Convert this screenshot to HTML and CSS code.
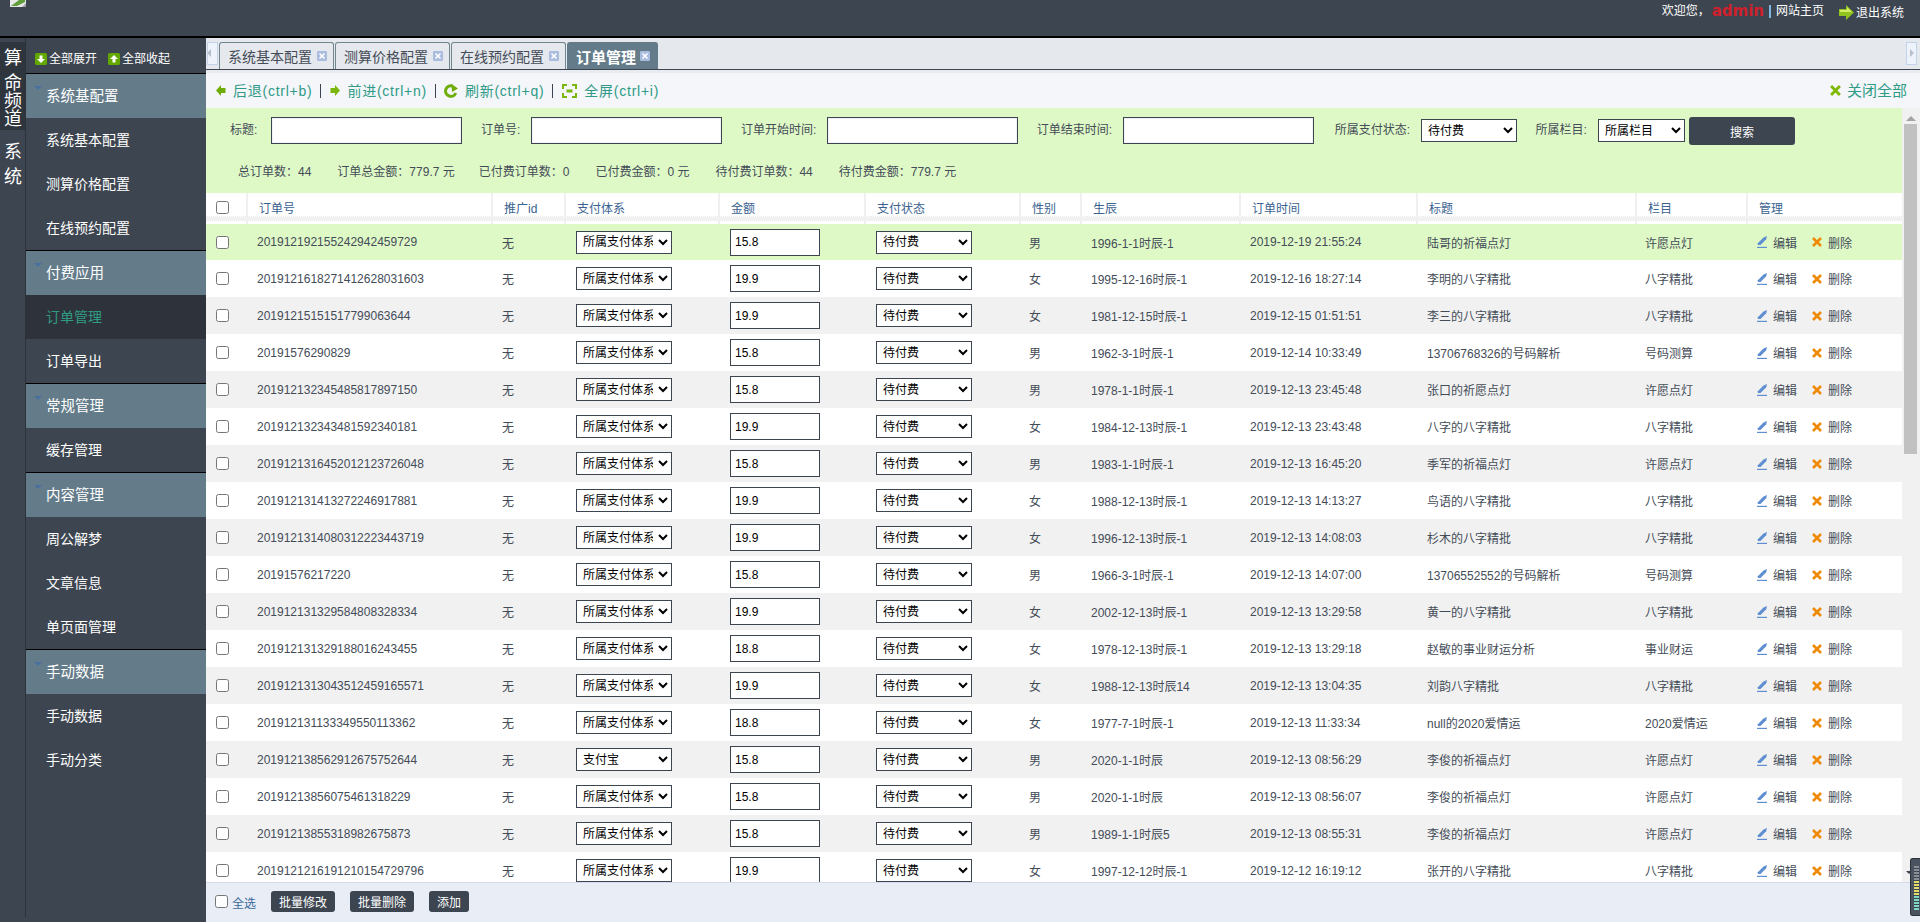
FILE: index.html
```html
<!DOCTYPE html>
<html lang="zh-CN">

<head>
    <meta charset="UTF-8">
    <title>订单管理</title>
    <link rel="stylesheet" href="styles.css">
</head>

<body>
    <svg class="defs" aria-hidden="true">
        <symbol id="i-back" viewBox="0 0 10 11"><path d="M0 5.500 5 0v3h4.500v5H5v3z" fill="#6fae0a"/></symbol>
        <symbol id="i-next" viewBox="0 0 10 11"><path d="M10 5.500 5 0v3H.5v5H5v3z" fill="#7ab60c"/></symbol>
        <symbol id="i-refresh" viewBox="0 0 14 14"><path d="M11.800 9A5.300 5.300 0 1 1 8.500 2" fill="none" stroke="#6fae0a" stroke-width="3"/><path d="M7.500 0 14 4.500 8 8z" fill="#6fae0a"/></symbol>
        <symbol id="i-full" viewBox="0 0 15 14"><path d="M1 5V1h4M10 1h4v4M14 9v4h-4M5 13H1V9" fill="none" stroke="#7ab60c" stroke-width="2"/><rect x="4.500" y="5.500" width="6" height="3" fill="#7ab60c"/></symbol>
        <symbol id="i-x" viewBox="0 0 10 10"><path d="M1 1l8 8M9 1l-8 8" stroke="currentColor" stroke-width="2.600" fill="none"/></symbol>
        <symbol id="i-edit" viewBox="0 0 10 12"><path d="M.8 7.200 6.500 1.500 10 0 9.200 3.200 3.500 9H.8z" fill="#5f8fd0"/><rect x="0" y="10.800" width="10" height="1.200" fill="#5f8fd0"/></symbol>
        <symbol id="i-close" viewBox="0 0 10 10"><rect width="10" height="10" rx="1" fill="#a9bce0"/><path d="M2.500 2.500l5 5M7.500 2.500l-5 5" stroke="#fff" stroke-width="1.600"/></symbol>
        <symbol id="i-down" viewBox="0 0 12 12"><rect width="12" height="12" rx="1.500" fill="#62a800"/><path d="M4.500 2.500h3V6H10L6 10 2 6h2.500z" fill="#fff"/></symbol>
        <symbol id="i-up" viewBox="0 0 12 12"><rect width="12" height="12" rx="1.500" fill="#62a800"/><path d="M4.500 9.500h3V6H10L6 2 2 6h2.500z" fill="#fff"/></symbol>
        <symbol id="i-exit" viewBox="0 0 15 15"><path d="M0 4h7V0l8 7.500L7 15v-4H0z" fill="#8fc31f"/><path d="M1 5h7V2l5 5H1z" fill="#d5ec63"/></symbol>
    </svg>

    <div class="top">
        <svg class="broken" viewBox="0 0 16 7"><path d="M0 0h16v7H0z" fill="#e8e8e8"/><path d="M1 6l8-6h6v2L7 6z" fill="#5f9e3a"/><path d="M12 7l4-4v4z" fill="#9aa0a6"/></svg>
        <div class="top-links">
            <span>欢迎您，</span>
            <b class="admin">admin</b>
            <i class="bar"></i>
            <a href="#">网站主页</a>
            <a href="#" class="exit"><svg class="i15"><use href="#i-exit"/></svg>退出系统</a>
        </div>
    </div>

    <div class="layout">
        <div class="strip">
            <div class="strip-dark"><span class="strip-first">算</span>命频道</div>
            <div class="strip-light">系统</div>
        </div>

        <div class="nav">
            <div class="nav-top">
                <a href="#"><svg class="i12"><use href="#i-down"/></svg>全部展开</a>
                <a href="#"><svg class="i12"><use href="#i-up"/></svg>全部收起</a>
            </div>
            <div class="nav-group">
                <div class="nav-head">系统基配置</div>
                <a href="#" class="nav-item">系统基本配置</a>
                <a href="#" class="nav-item">测算价格配置</a>
                <a href="#" class="nav-item">在线预约配置</a>
            </div>
            <div class="nav-group">
                <div class="nav-head">付费应用</div>
                <a href="#" class="nav-item active">订单管理</a>
                <a href="#" class="nav-item">订单导出</a>
            </div>
            <div class="nav-group">
                <div class="nav-head">常规管理</div>
                <a href="#" class="nav-item">缓存管理</a>
            </div>
            <div class="nav-group">
                <div class="nav-head">内容管理</div>
                <a href="#" class="nav-item">周公解梦</a>
                <a href="#" class="nav-item">文章信息</a>
                <a href="#" class="nav-item">单页面管理</a>
            </div>
            <div class="nav-group">
                <div class="nav-head">手动数据</div>
                <a href="#" class="nav-item">手动数据</a>
                <a href="#" class="nav-item">手动分类</a>
            </div>
        </div>

        <div class="main">
            <div class="tabs">
                <div class="tab-scroll left"></div>
                <div class="tab">系统基本配置<svg class="i10"><use href="#i-close"/></svg></div>
                <div class="tab">测算价格配置<svg class="i10"><use href="#i-close"/></svg></div>
                <div class="tab">在线预约配置<svg class="i10"><use href="#i-close"/></svg></div>
                <div class="tab current">订单管理<svg class="i10"><use href="#i-close"/></svg></div>
                <div class="tab-scroll right"></div>
            </div>

            <div class="tools">
                <a href="#"><svg class="i-back"><use href="#i-back"/></svg>后退(ctrl+b)</a>
                <a href="#" class="tight"><svg class="i-back"><use href="#i-next"/></svg>前进(ctrl+n)</a>
                <a href="#"><svg class="i-ref"><use href="#i-refresh"/></svg>刷新(ctrl+q)</a>
                <a href="#" class="nosep"><svg class="i-full"><use href="#i-full"/></svg>全屏(ctrl+i)</a>
                <a href="#" class="close-all nosep"><svg class="i-cx"><use href="#i-x"/></svg>关闭全部</a>
            </div>

            <div class="body">
                <div class="content">
                    <div class="search">
                        <form class="search-row" action="">
                            <label>标题:</label>
                            <input type="text" class="text">
                            <label>订单号:</label>
                            <input type="text" class="text">
                            <label>订单开始时间:</label>
                            <input type="text" class="text">
                            <label>订单结束时间:</label>
                            <input type="text" class="text">
                            <label class="wide">所属支付状态:</label>
                            <select class="sel-state"><option>待付费</option></select>
                            <label>所属栏目:</label>
                            <select class="sel-cat"><option>所属栏目</option></select>
                            <button type="button" class="btn-search">搜索</button>
                        </form>
                        <div class="stats">
                            <span>总订单数：44</span>
                            <span class="close-up">订单总金额：779.7 元</span>
                            <span>已付费订单数：0</span>
                            <span>已付费金额：0 元</span>
                            <span>待付费订单数：44</span>
                            <span>待付费金额：779.7 元</span>
                        </div>
                    </div>

                    <table class="list">
                        <colgroup>
                            <col class="c-check"><col class="c-no"><col class="c-id"><col class="c-pay"><col class="c-money"><col class="c-state"><col class="c-sex"><col class="c-birth"><col class="c-time"><col class="c-title"><col class="c-cat"><col class="c-op">
                        </colgroup>
                        <thead>
                            <tr>
                                <th><input type="checkbox"></th>
                                <th>订单号</th><th>推广id</th><th>支付体系</th><th>金额</th><th>支付状态</th><th>性别</th><th>生辰</th><th>订单时间</th><th>标题</th><th>栏目</th><th>管理</th>
                            </tr>
                        </thead>
                        <tbody>
                            <tr class="on">
                                <td><input type="checkbox"></td><td>201912192155242942459729</td><td>无</td>
                                <td><select><option>所属支付体系</option></select></td><td><input type="text" class="money" value="15.8"></td><td><select><option>待付费</option></select></td>
                                <td>男</td><td>1996-1-1时辰-1</td><td>2019-12-19 21:55:24</td><td>陆哥的祈福点灯</td><td>许愿点灯</td>
                                <td><a href="#" class="op"><svg class="i-op"><use href="#i-edit"/></svg>编辑</a><a href="#" class="op del"><svg class="i-op"><use href="#i-x"/></svg>删除</a></td>
                            </tr>
                            <tr>
                                <td><input type="checkbox"></td><td>2019121618271412628031603</td><td>无</td>
                                <td><select><option>所属支付体系</option></select></td><td><input type="text" class="money" value="19.9"></td><td><select><option>待付费</option></select></td>
                                <td>女</td><td>1995-12-16时辰-1</td><td>2019-12-16 18:27:14</td><td>李明的八字精批</td><td>八字精批</td>
                                <td><a href="#" class="op"><svg class="i-op"><use href="#i-edit"/></svg>编辑</a><a href="#" class="op del"><svg class="i-op"><use href="#i-x"/></svg>删除</a></td>
                            </tr>
                            <tr>
                                <td><input type="checkbox"></td><td>20191215151517799063644</td><td>无</td>
                                <td><select><option>所属支付体系</option></select></td><td><input type="text" class="money" value="19.9"></td><td><select><option>待付费</option></select></td>
                                <td>女</td><td>1981-12-15时辰-1</td><td>2019-12-15 01:51:51</td><td>李三的八字精批</td><td>八字精批</td>
                                <td><a href="#" class="op"><svg class="i-op"><use href="#i-edit"/></svg>编辑</a><a href="#" class="op del"><svg class="i-op"><use href="#i-x"/></svg>删除</a></td>
                            </tr>
                            <tr>
                                <td><input type="checkbox"></td><td>20191576290829</td><td>无</td>
                                <td><select><option>所属支付体系</option></select></td><td><input type="text" class="money" value="15.8"></td><td><select><option>待付费</option></select></td>
                                <td>男</td><td>1962-3-1时辰-1</td><td>2019-12-14 10:33:49</td><td>13706768326的号码解析</td><td>号码测算</td>
                                <td><a href="#" class="op"><svg class="i-op"><use href="#i-edit"/></svg>编辑</a><a href="#" class="op del"><svg class="i-op"><use href="#i-x"/></svg>删除</a></td>
                            </tr>
                            <tr>
                                <td><input type="checkbox"></td><td>201912132345485817897150</td><td>无</td>
                                <td><select><option>所属支付体系</option></select></td><td><input type="text" class="money" value="15.8"></td><td><select><option>待付费</option></select></td>
                                <td>男</td><td>1978-1-1时辰-1</td><td>2019-12-13 23:45:48</td><td>张口的祈愿点灯</td><td>许愿点灯</td>
                                <td><a href="#" class="op"><svg class="i-op"><use href="#i-edit"/></svg>编辑</a><a href="#" class="op del"><svg class="i-op"><use href="#i-x"/></svg>删除</a></td>
                            </tr>
                            <tr>
                                <td><input type="checkbox"></td><td>201912132343481592340181</td><td>无</td>
                                <td><select><option>所属支付体系</option></select></td><td><input type="text" class="money" value="19.9"></td><td><select><option>待付费</option></select></td>
                                <td>女</td><td>1984-12-13时辰-1</td><td>2019-12-13 23:43:48</td><td>八字的八字精批</td><td>八字精批</td>
                                <td><a href="#" class="op"><svg class="i-op"><use href="#i-edit"/></svg>编辑</a><a href="#" class="op del"><svg class="i-op"><use href="#i-x"/></svg>删除</a></td>
                            </tr>
                            <tr>
                                <td><input type="checkbox"></td><td>2019121316452012123726048</td><td>无</td>
                                <td><select><option>所属支付体系</option></select></td><td><input type="text" class="money" value="15.8"></td><td><select><option>待付费</option></select></td>
                                <td>男</td><td>1983-1-1时辰-1</td><td>2019-12-13 16:45:20</td><td>季军的祈福点灯</td><td>许愿点灯</td>
                                <td><a href="#" class="op"><svg class="i-op"><use href="#i-edit"/></svg>编辑</a><a href="#" class="op del"><svg class="i-op"><use href="#i-x"/></svg>删除</a></td>
                            </tr>
                            <tr>
                                <td><input type="checkbox"></td><td>201912131413272246917881</td><td>无</td>
                                <td><select><option>所属支付体系</option></select></td><td><input type="text" class="money" value="19.9"></td><td><select><option>待付费</option></select></td>
                                <td>女</td><td>1988-12-13时辰-1</td><td>2019-12-13 14:13:27</td><td>鸟语的八字精批</td><td>八字精批</td>
                                <td><a href="#" class="op"><svg class="i-op"><use href="#i-edit"/></svg>编辑</a><a href="#" class="op del"><svg class="i-op"><use href="#i-x"/></svg>删除</a></td>
                            </tr>
                            <tr>
                                <td><input type="checkbox"></td><td>2019121314080312223443719</td><td>无</td>
                                <td><select><option>所属支付体系</option></select></td><td><input type="text" class="money" value="19.9"></td><td><select><option>待付费</option></select></td>
                                <td>女</td><td>1996-12-13时辰-1</td><td>2019-12-13 14:08:03</td><td>杉木的八字精批</td><td>八字精批</td>
                                <td><a href="#" class="op"><svg class="i-op"><use href="#i-edit"/></svg>编辑</a><a href="#" class="op del"><svg class="i-op"><use href="#i-x"/></svg>删除</a></td>
                            </tr>
                            <tr>
                                <td><input type="checkbox"></td><td>20191576217220</td><td>无</td>
                                <td><select><option>所属支付体系</option></select></td><td><input type="text" class="money" value="15.8"></td><td><select><option>待付费</option></select></td>
                                <td>男</td><td>1966-3-1时辰-1</td><td>2019-12-13 14:07:00</td><td>13706552552的号码解析</td><td>号码测算</td>
                                <td><a href="#" class="op"><svg class="i-op"><use href="#i-edit"/></svg>编辑</a><a href="#" class="op del"><svg class="i-op"><use href="#i-x"/></svg>删除</a></td>
                            </tr>
                            <tr>
                                <td><input type="checkbox"></td><td>201912131329584808328334</td><td>无</td>
                                <td><select><option>所属支付体系</option></select></td><td><input type="text" class="money" value="19.9"></td><td><select><option>待付费</option></select></td>
                                <td>女</td><td>2002-12-13时辰-1</td><td>2019-12-13 13:29:58</td><td>黄一的八字精批</td><td>八字精批</td>
                                <td><a href="#" class="op"><svg class="i-op"><use href="#i-edit"/></svg>编辑</a><a href="#" class="op del"><svg class="i-op"><use href="#i-x"/></svg>删除</a></td>
                            </tr>
                            <tr>
                                <td><input type="checkbox"></td><td>201912131329188016243455</td><td>无</td>
                                <td><select><option>所属支付体系</option></select></td><td><input type="text" class="money" value="18.8"></td><td><select><option>待付费</option></select></td>
                                <td>女</td><td>1978-12-13时辰-1</td><td>2019-12-13 13:29:18</td><td>赵敏的事业财运分析</td><td>事业财运</td>
                                <td><a href="#" class="op"><svg class="i-op"><use href="#i-edit"/></svg>编辑</a><a href="#" class="op del"><svg class="i-op"><use href="#i-x"/></svg>删除</a></td>
                            </tr>
                            <tr>
                                <td><input type="checkbox"></td><td>2019121313043512459165571</td><td>无</td>
                                <td><select><option>所属支付体系</option></select></td><td><input type="text" class="money" value="19.9"></td><td><select><option>待付费</option></select></td>
                                <td>女</td><td>1988-12-13时辰14</td><td>2019-12-13 13:04:35</td><td>刘韵八字精批</td><td>八字精批</td>
                                <td><a href="#" class="op"><svg class="i-op"><use href="#i-edit"/></svg>编辑</a><a href="#" class="op del"><svg class="i-op"><use href="#i-x"/></svg>删除</a></td>
                            </tr>
                            <tr>
                                <td><input type="checkbox"></td><td>201912131133349550113362</td><td>无</td>
                                <td><select><option>所属支付体系</option></select></td><td><input type="text" class="money" value="18.8"></td><td><select><option>待付费</option></select></td>
                                <td>女</td><td>1977-7-1时辰-1</td><td>2019-12-13 11:33:34</td><td>null的2020爱情运</td><td>2020爱情运</td>
                                <td><a href="#" class="op"><svg class="i-op"><use href="#i-edit"/></svg>编辑</a><a href="#" class="op del"><svg class="i-op"><use href="#i-x"/></svg>删除</a></td>
                            </tr>
                            <tr>
                                <td><input type="checkbox"></td><td>201912138562912675752644</td><td>无</td>
                                <td><select><option>支付宝</option></select></td><td><input type="text" class="money" value="15.8"></td><td><select><option>待付费</option></select></td>
                                <td>男</td><td>2020-1-1时辰</td><td>2019-12-13 08:56:29</td><td>李俊的祈福点灯</td><td>许愿点灯</td>
                                <td><a href="#" class="op"><svg class="i-op"><use href="#i-edit"/></svg>编辑</a><a href="#" class="op del"><svg class="i-op"><use href="#i-x"/></svg>删除</a></td>
                            </tr>
                            <tr>
                                <td><input type="checkbox"></td><td>20191213856075461318229</td><td>无</td>
                                <td><select><option>所属支付体系</option></select></td><td><input type="text" class="money" value="15.8"></td><td><select><option>待付费</option></select></td>
                                <td>男</td><td>2020-1-1时辰</td><td>2019-12-13 08:56:07</td><td>李俊的祈福点灯</td><td>许愿点灯</td>
                                <td><a href="#" class="op"><svg class="i-op"><use href="#i-edit"/></svg>编辑</a><a href="#" class="op del"><svg class="i-op"><use href="#i-x"/></svg>删除</a></td>
                            </tr>
                            <tr>
                                <td><input type="checkbox"></td><td>20191213855318982675873</td><td>无</td>
                                <td><select><option>所属支付体系</option></select></td><td><input type="text" class="money" value="15.8"></td><td><select><option>待付费</option></select></td>
                                <td>男</td><td>1989-1-1时辰5</td><td>2019-12-13 08:55:31</td><td>李俊的祈福点灯</td><td>许愿点灯</td>
                                <td><a href="#" class="op"><svg class="i-op"><use href="#i-edit"/></svg>编辑</a><a href="#" class="op del"><svg class="i-op"><use href="#i-x"/></svg>删除</a></td>
                            </tr>
                            <tr>
                                <td><input type="checkbox"></td><td>2019121216191210154729796</td><td>无</td>
                                <td><select><option>所属支付体系</option></select></td><td><input type="text" class="money" value="19.9"></td><td><select><option>待付费</option></select></td>
                                <td>女</td><td>1997-12-12时辰-1</td><td>2019-12-12 16:19:12</td><td>张开的八字精批</td><td>八字精批</td>
                                <td><a href="#" class="op"><svg class="i-op"><use href="#i-edit"/></svg>编辑</a><a href="#" class="op del"><svg class="i-op"><use href="#i-x"/></svg>删除</a></td>
                            </tr>
                        </tbody>
                    </table>
                </div>
                <div class="scrollbar">
                    <div class="scroll-up"></div>
                    <div class="scroll-thumb"></div>
                </div>
            </div>

            <div class="foot">
                <input type="checkbox" id="all">
                <label for="all">全选</label>
                <button type="button" class="btn-foot">批量修改</button>
                <button type="button" class="btn-foot">批量删除</button>
                <button type="button" class="btn-foot">添加</button>
            </div>
        </div>
    </div>

    <div class="dock"></div>
</body>

</html>
```
FILE: styles.css
```css
/* Base styles */
* {
    box-sizing: border-box;
}

html,
body {
    margin: 0;
    height: 922px;
    overflow: hidden;
}

body {
    font-family: "Liberation Sans", "Noto Sans CJK SC", sans-serif;
    font-size: 12px;
    color: #444c58;
    background-color: #3d4550;
}

a {
    color: inherit;
    text-decoration: none;
}

.defs {
    display: none;
}

svg {
    display: block;
    flex: none;
}

.i10 {
    width: 10px;
    height: 10px;
}

.i12 {
    width: 12px;
    height: 12px;
}

.i15 {
    width: 15px;
    height: 15px;
}

/* Top bar */
.top {
    height: 38px;
    display: flex;
    justify-content: space-between;
    background-color: #3d4550;
    border-bottom: 2px solid #000;
}

.broken {
    width: 16px;
    height: 7px;
    margin-left: 10px;
}

.top-links {
    display: flex;
    align-items: flex-start;
    padding: 3px 16px 0 0;
    color: #fff;
    line-height: 16px;
}

.admin {
    margin-left: 2px;
    color: #d0202c;
    font-family: "DejaVu Sans", sans-serif;
    font-size: 15px;
    font-weight: bold;
}

.bar {
    width: 2px;
    height: 13px;
    margin: 2px 5px 0 5px;
    background-color: #7fb6e0;
}

.exit {
    display: flex;
    gap: 2px;
    margin: 0 0 0 15px;
    padding-top: 2px;
}

/* Layout */
.layout {
    display: flex;
    height: 884px;
}

.strip {
    width: 26px;
    flex: none;
    border-right: 1px solid #2c323a;
    margin-bottom: 5px;
    padding-top: 4px;
    color: #fff;
    font-size: 18px;
    line-height: 18px;
}

.strip-dark {
    height: 88px;
    padding: 7px 4px 0;
    background-color: #2f353d;
}

.strip-first {
    display: block;
    margin-bottom: 7px;
}

.strip-light {
    padding: 10px 4px 0;
    line-height: 25px;
}

/* Left menu */
.nav {
    width: 180px;
    flex: none;
    color: #fff;
    font-size: 14px;
}

.nav-top {
    height: 35px;
    display: flex;
    gap: 11px;
    padding: 15px 0 0 9px;
    font-size: 12px;
    line-height: 12px;
}

.nav-top a {
    display: flex;
    gap: 2px;
}

.nav-group {
    border-top: 1px solid #000;
}

.nav-head {
    position: relative;
    height: 44px;
    padding-left: 20px;
    background-color: #647c8a;
    line-height: 44px;
    font-size: 14.500px;
}

.nav-head::before {
    content: "";
    position: absolute;
    left: 8px;
    top: 12px;
    border: 4px solid transparent;
    border-bottom: 0;
    border-top: 4px solid #47709f;
}

.nav-item {
    display: block;
    height: 44px;
    padding-left: 20px;
    line-height: 44px;
}

.nav-item.active {
    background-color: #2e333b;
    color: #2e9c82;
}

/* Main */
.main {
    flex: 1;
    min-width: 0;
    display: flex;
    flex-direction: column;
    background-color: #fff;
}

.tabs {
    height: 32px;
    flex: none;
    display: flex;
    align-items: flex-end;
    padding-left: 1px;
    background-color: #e5e8ec;
    border-bottom: 1px solid #3d4550;
}

.tab-scroll {
    position: relative;
    width: 11px;
    height: 23px;
    align-self: flex-start;
    margin: 4px 1px 0 0;
    background-color: #eef3fb;
    border: 1px solid #c3d4ea;
}

.tab-scroll.right {
    margin: 4px 3px 0 auto;
}

.tab-scroll::after {
    content: "";
    position: absolute;
    top: 6px;
    border: 4px solid transparent;
}

.tab-scroll.left::after {
    left: -1px;
    border-right: 4px solid #b5bfcc;
    border-left: 0;
}

.tab-scroll.right::after {
    left: 3px;
    border-left: 4px solid #b5bfcc;
    border-right: 0;
}

.tab {
    height: 27px;
    display: flex;
    align-items: center;
    gap: 5px;
    margin-right: 1px;
    padding: 0 6px 0 8px;
    background-color: #e5e8ec;
    border: 1px solid #71858f;
    border-bottom: 0;
    border-radius: 3px 3px 0 0;
    font-size: 14px;
    color: #444c58;
}

.tab.current {
    gap: 4px;
    padding-right: 7px;
    background-color: #647c8a;
    border-color: #647c8a;
    color: #fff;
    font-size: 15px;
    font-weight: bold;
}

.tools {
    height: 38px;
    flex: none;
    display: flex;
    align-items: center;
    padding: 0 13px 0 10px;
    background-color: #f4f6fa;
    border-top: 3px solid #e8ebef;
    color: #2f9a85;
    font-size: 14px;
    letter-spacing: .75px;
}

.tools a {
    position: relative;
    display: flex;
    align-items: center;
    gap: 7px;
    margin-right: 9px;
    padding-right: 9px;
    line-height: 16px;
}

.tools a.tight {
    margin-right: 8px;
}

.tools a::after {
    content: "";
    position: absolute;
    right: 0;
    top: 1px;
    width: 1px;
    height: 14px;
    background-color: #3d4550;
}

.tools a.nosep::after {
    display: none;
}

.tools .close-all {
    margin: 0 0 0 auto;
    padding: 0;
    gap: 6px;
    font-size: 15px;
    letter-spacing: 0;
}

.i-back {
    width: 10px;
    height: 11px;
}

.i-ref {
    width: 14px;
    height: 14px;
}

.i-full {
    width: 15px;
    height: 14px;
}

.i-cx {
    width: 11px;
    height: 11px;
    color: #7fb800;
}

.body {
    flex: 1;
    min-height: 0;
    display: flex;
}

.content {
    width: 1696px;
    flex: none;
    overflow: hidden;
}

/* Search panel */
.search {
    height: 85px;
    padding: 9px 0 0 24px;
    background-color: #dff9c6;
}

.search-row {
    display: flex;
    align-items: flex-start;
    height: 27px;
}

.search-row label {
    margin: 0 11px 0 18.600px;
    line-height: 26px;
    white-space: nowrap;
}

.search-row label:first-child {
    margin: 0 14px 0 0;
}

.search-row label.wide {
    margin-left: 20.500px;
}

.text {
    width: 191px;
    height: 27px;
    background-color: #fff;
    border: 1px solid #3d4550;
    box-shadow: inset 0 0 0 1px #f0f2f8;
}

select {
    height: 23px;
    width: 96px;
    padding: 0 2px;
    background-color: #fff;
    border: 1px solid #3d4550;
    border-radius: 0;
    color: #000;
    font-family: inherit;
    font-size: 12px;
}

.search-row select {
    margin-top: 2px;
}

.sel-cat {
    width: 87px;
}

.btn-search {
    width: 106px;
    height: 28px;
    margin-left: 4px;
    background-color: #3d4550;
    border: 0;
    border-radius: 3px;
    color: #fff;
    font-family: inherit;
    font-size: 12px;
}

.stats {
    display: flex;
    gap: 26px;
    padding: 20px 0 0 8px;
    line-height: 16px;
}

.stats .close-up {
    margin-right: -2px;
}

/* Table */
.list {
    width: 1696px;
    table-layout: fixed;
    border-collapse: collapse;
}

.c-check { width: 41px; }
.c-no { width: 245px; }
.c-id { width: 73px; }
.c-pay { width: 154px; }
.c-money { width: 146px; }
.c-state { width: 155px; }
.c-sex { width: 61px; }
.c-birth { width: 159px; }
.c-time { width: 177px; }
.c-title { width: 219px; }
.c-cat { width: 111px; }
.c-op { width: 155px; }

.list th {
    height: 30px;
    padding: 0 0 0 11px;
    border-right: 2px solid #f0f0f0;
    background-color: #fff;
    background-image: repeating-linear-gradient(90deg, #fff 0 1px, #e9e9e9 1px 2px), linear-gradient(#f1f1f1, #f1f1f1);
    background-size: 100% 1px, 100% 5px;
    background-position: 0 23px, 0 23px;
    background-repeat: no-repeat;
    color: #3a6290;
    font-weight: normal;
    text-align: left;
}

.list th:first-child,
.list td:first-child {
    padding-left: 10px;
}

.list th:last-child {
    border-right: 0;
}

.list input[type="checkbox"] {
    display: block;
    margin: 0;
}

.list td {
    height: 37px;
    padding: 0 0 0 10px;
    white-space: nowrap;
}

.list td:nth-child(4),
.list td:nth-child(5),
.list td:nth-child(6) {
    padding-left: 11px;
}

.list td:nth-child(7),
.list td:nth-child(11) {
    padding-left: 9px;
}

.list tbody tr:nth-child(even) {
    background-color: #fff;
}

.list tbody tr:nth-child(odd) {
    background-color: #f1f1f1;
}

.list tbody tr.on {
    background-color: #dff9c6;
}

.list thead tr {
    border-bottom: 2px solid #fff;
}

.money {
    display: block;
    width: 90px;
    height: 27px;
    padding: 0 4px;
    background-color: #fff;
    border: 1px solid #3d4550;
    color: #000;
    font-family: inherit;
    font-size: 12px;
}

.op {
    display: inline-flex;
    align-items: center;
    gap: 6px;
    margin-right: 15px;
    vertical-align: middle;
}

.i-op {
    width: 10px;
    height: 12px;
}

.del .i-op {
    height: 10px;
    color: #ee8a05;
}

/* Fake scrollbar */
.scrollbar {
    width: 18px;
    flex: none;
    padding-left: 2px;
    background-color: #f1f1f1;
}

.scroll-up {
    width: 0;
    margin: 8px 0 3px 2px;
    border: 5px solid transparent;
    border-top: 0;
    border-bottom: 5px solid #a3a3a3;
}

.scroll-thumb {
    width: 13px;
    height: 330px;
    background-color: #c1c1c1;
}

/* Bottom bar */
.foot {
    height: 40px;
    flex: none;
    display: flex;
    align-items: center;
    padding-left: 9px;
    background-color: #e9edf6;
    border-top: 1px solid #d5dbeb;
    color: #3a6a9a;
}

.foot input {
    margin: 0 4px 3px 0;
}

.foot label {
    margin-right: 15px;
}

.btn-foot {
    height: 21px;
    margin: 0 15px 2px 0;
    padding: 0 8px;
    background-color: #3d4550;
    border: 0;
    border-radius: 3px;
    color: #fff;
    font-family: inherit;
    font-size: 12px;
}

/* Little dock widget stuck on the window edge */
.dock {
    position: absolute;
    right: 0;
    top: 858px;
    width: 10px;
    height: 58px;
    background-color: #4b5260;
    background-image: repeating-linear-gradient(#8a8f98 0 2px, #3d4550 2px 3px), repeating-linear-gradient(#e4dc6a 0 2px, #3d4550 2px 3px), repeating-linear-gradient(#7fd8c4 0 2px, #3d4550 2px 3px);
    background-size: 5px 15px, 5px 15px, 5px 14px;
    background-position: 3px 7px, 3px 22px, 3px 37px;
    background-repeat: no-repeat;
    border-radius: 3px 0 0 3px;
    border: 1px solid #2c323a;
    border-right: 0;
}

.dock::before {
    content: "";
    position: absolute;
    left: -5px;
    top: 12px;
    border: 3px solid transparent;
    border-top: 3px solid #3d4550;
    border-bottom: 0;
}
```
